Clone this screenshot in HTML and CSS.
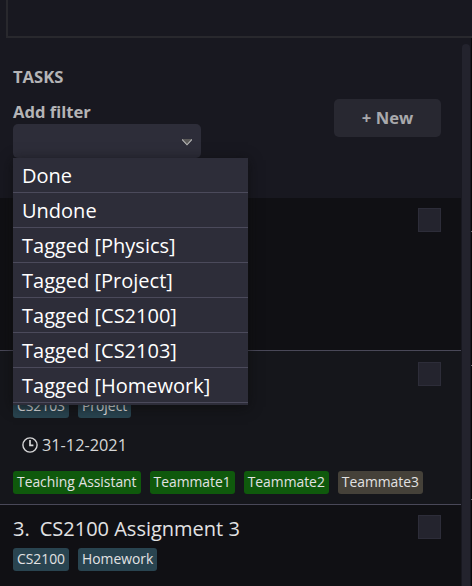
FILE: index.html
```html
<!DOCTYPE html>
<html lang="en">
<head>
<meta charset="utf-8">
<title>Tasks</title>
<link rel="stylesheet" href="styles.css">
</head>
<body>
<div class="app">
  <div class="display"></div>
  <div class="panel">
    <main class="content">
      <header class="head">
        <div class="filters">
          <h1 class="title">TASKS</h1>
          <div class="label">Add filter</div>
          <div class="select">
            <svg class="arrow" width="10" height="7" viewBox="0 0 10 7"><path d="M0 0H10L5 6.5Z" fill="#5b5a59"/><path d="M0 .5L5 5.8L10 .5" fill="none" stroke="#b5b5b5" stroke-width="1.1"/></svg>
            <ul class="menu">
              <li><span>Done</span></li>
              <li><span>Undone</span></li>
              <li><span>Tagged [Physics]</span></li>
              <li><span>Tagged [Project]</span></li>
              <li><span>Tagged [CS2100]</span></li>
              <li><span>Tagged [CS2103]</span></li>
              <li><span>Tagged [Homework]</span></li>
            </ul>
          </div>
        </div>
        <button class="new">+ New</button>
      </header>
      <section class="task first"><div class="body"></div><div class="check"></div></section>
      <section class="task second">
        <div class="body">
          <div class="name"></div>
          <div class="tags"><span class="tag">CS2103</span><span class="tag">Project</span></div>
          <div class="date"><svg width="16" height="16" viewBox="0 0 16 16" fill="none" stroke="#d6d6d7" stroke-width="1.4"><circle cx="8" cy="8" r="7.1"/><path d="M8 3V8.3H11.4" stroke-width="1.7"/></svg><span class="day">31-12-2021</span></div>
          <div class="tags"><span class="tag done">Teaching Assistant</span><span class="tag done">Teammate1</span><span class="tag done">Teammate2</span><span class="tag muted">Teammate3</span></div>
        </div>
        <div class="check"></div>
      </section>
      <section class="task third">
        <div class="body">
          <div class="name"><span>3.</span><span>CS2100 Assignment 3</span></div>
          <div class="tags"><span class="tag">CS2100</span><span class="tag">Homework</span></div>
        </div>
        <div class="check"></div>
      </section>
    </main>
    <div class="scroll"></div>
    <div class="edge"><i></i><i></i><i></i></div>
  </div>
</div>
</body>
</html>
```
FILE: styles.css
```css
* { box-sizing: border-box; }
body {
  margin: 0;
  background: #181820;
  font-family: "Open Sans", "Noto Sans", sans-serif;
  color: #e2e2e3;
}
.app { width: 472px; height: 586px; overflow: hidden; display: flex; flex-direction: column; }
.display {
  height: 38px;
  flex: none;
  margin-left: 6px;
  border-left: 2px solid #28282d;
  border-bottom: 2px solid #28282d;
}
.panel { flex: 1; display: flex; min-height: 0; }
.content { width: 461px; display: flex; flex-direction: column; }
.head {
  height: 160px;
  flex: none;
  padding: 0 20px 0 13px;
  display: flex;
  justify-content: space-between;
}
.title, .label { margin: 0; font-size: 16.6px; font-weight: 700; color: #b4b4b6; line-height: 24px; }
.title { margin-top: 27px; }
.label { margin-top: 11px; }
.select {
  position: relative;
  width: 188px;
  height: 34px;
  background: #2d2d39;
  border-radius: 5px;
  display: flex;
  align-items: center;
  justify-content: flex-end;
  padding: 2px 9px 0 0;
}
.menu {
  position: absolute;
  z-index: 2;
  left: 0;
  top: 34px;
  width: 235px;
  margin: 0;
  padding: 0 0 2px;
  list-style: none;
  background: #2d2d39;
  box-shadow: 0 2px 12px rgba(10, 10, 10, .65);
}
.menu li {
  height: 35px;
  padding-left: 9px;
  border-bottom: 1px solid #4b4a5b;
  font-size: 20px;
  line-height: 35px;
  color: #fff;
  white-space: nowrap;
}
.new {
  width: 107px;
  height: 38px;
  margin-top: 61px;
  padding: 0;
  border: 0;
  border-radius: 5px;
  background: #282831;
  color: #a9a9ac;
  font: 700 16.6px/38px "Open Sans", sans-serif;
}
.task {
  flex: none;
  display: flex;
  justify-content: space-between;
  padding: 10px 20px 0 13px;
  border-bottom: 1px solid #494858;
  background: #101014;
}
.first { height: 153px; }
.second { height: 154px; background: #15161b; }
.third { height: 100px; border: 0; }
.check {
  flex: none;
  width: 23px;
  height: 24px;
  background: #24242e;
  border: 1px solid #2d2d39;
}
.body { width: 0; flex: 1; overflow: visible; }
.second .check { margin-top: 1px; }
.name { height: 28px; margin-bottom: 6px; display: flex; gap: 10px; font-size: 20px; line-height: 28px; white-space: nowrap; }
.third .name { height: 28px; margin-bottom: 5px; }
.tags { display: flex; gap: 9px; }
.tag {
  height: 23px;
  padding: 0 4px;
  border-radius: 3px;
  background: #294450;
  font-size: 13.86px;
  line-height: 22px;
  white-space: nowrap;
}
.done { background: #0f590c; }
.muted { background: #454139; }
.date { height: 53px; padding-left: 9px; display: flex; align-items: center; gap: 4px; font-size: 16.3px; color: #d6d6d7; }
.scroll { width: 8px; margin: 6px 1px 0; border-radius: 4px 4px 0 0; background: #23232d; }
.edge { width: 1px; background: #09090c; padding-top: 193px; display: flex; flex-direction: column; gap: 133px; }
.edge i { height: 1px; flex: none; background: #6b6b72; }
```
